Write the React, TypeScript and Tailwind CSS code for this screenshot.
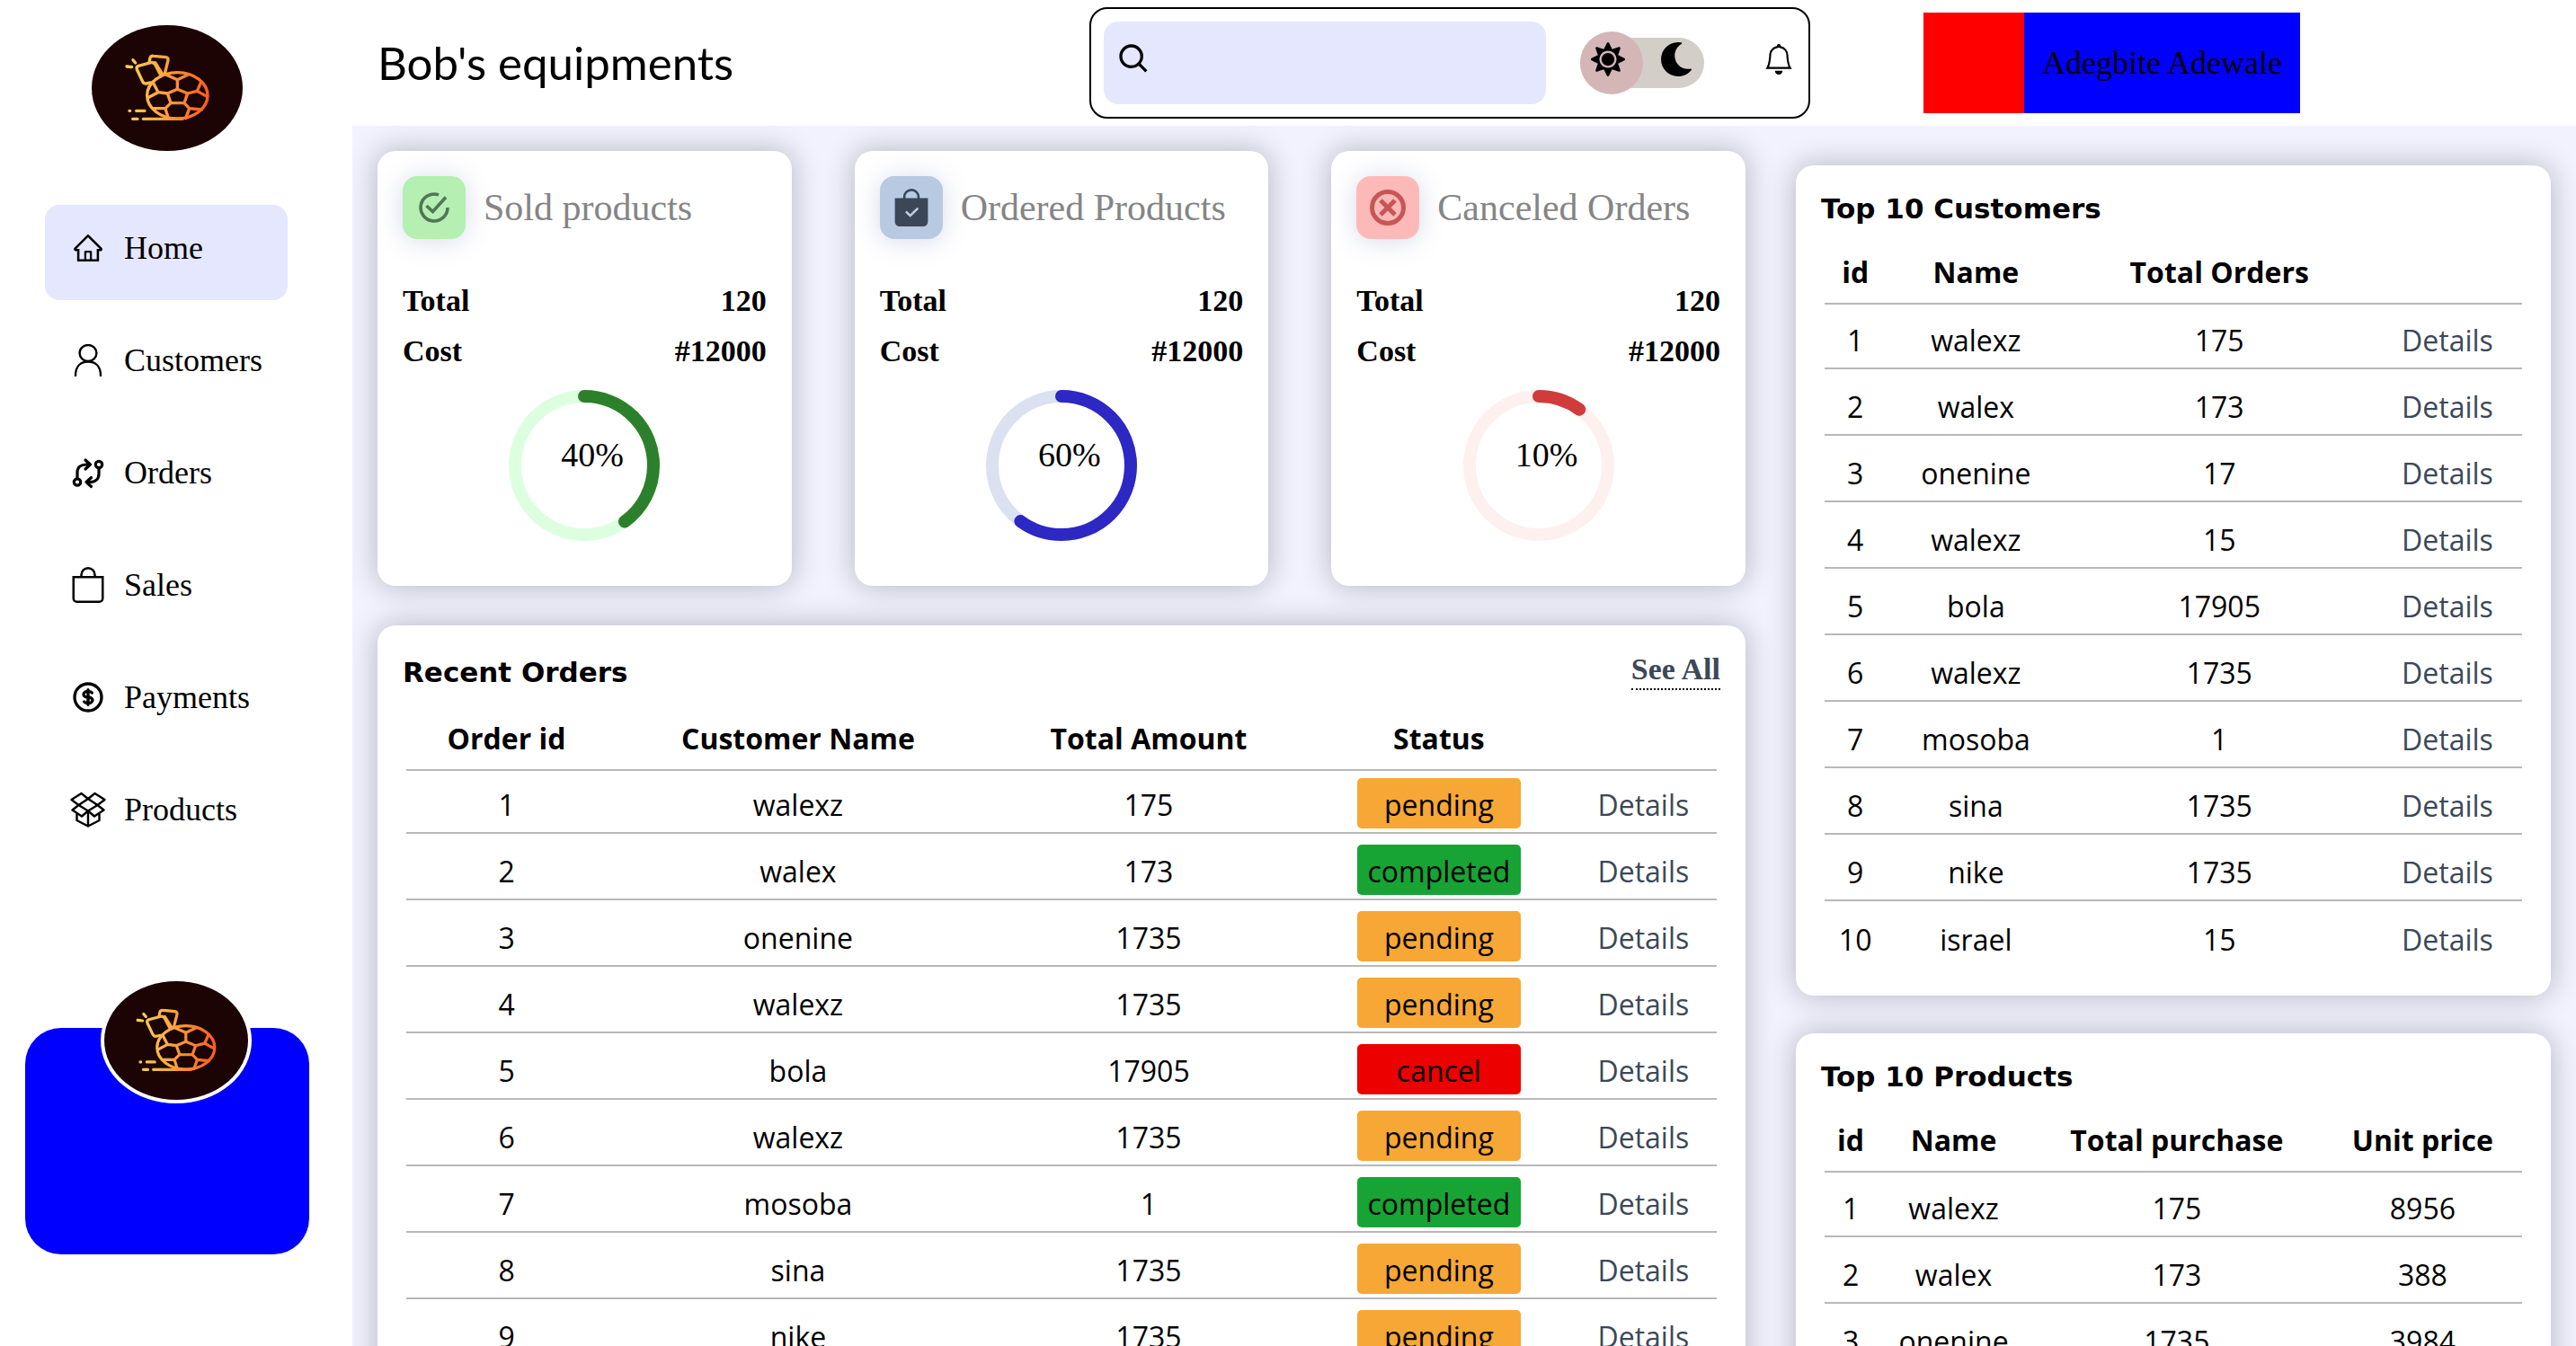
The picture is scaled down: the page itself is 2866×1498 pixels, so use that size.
import { useId } from "react";
import type { ReactNode } from "react";
import { AiOutlineHome } from "react-icons/ai";
import { BiSearch } from "react-icons/bi";
import { BsBag, BsBagCheckFill, BsBell } from "react-icons/bs";
import { FaMoon, FaSun } from "react-icons/fa";
import { HiOutlineCurrencyDollar } from "react-icons/hi";

function Logo({ className }: { className: string }) {
  const id = useId();
  return (
    <svg viewBox="36 24 504 420" preserveAspectRatio="none" className={className} role="img" aria-label="Bob's equipments logo">
      <defs>
        <linearGradient id={id} gradientUnits="userSpaceOnUse" x1="150" y1="240" x2="428" y2="260">
          <stop offset="0" stopColor="#f9d256" />
          <stop offset="0.4" stopColor="#fbab42" />
          <stop offset="1" stopColor="#fb5b1c" />
        </linearGradient>
      </defs>
      <ellipse cx="288" cy="234" rx="252" ry="210" fill="#1c0405" />
      <g fill="none" stroke={`url(#${id})`} strokeWidth="10" strokeLinecap="round" strokeLinejoin="round">
        <ellipse cx="322" cy="259" rx="101" ry="77" />
        <path d="M322 238 356 252 345 284H300L289 252Z" />
        <path d="M322 238V206L285 190M322 206 357 190M289 252 258 248 224 266M258 248 240 214M356 252 388 244 402 212M388 244 422 263M300 284 282 302 292 335M282 302H242M345 284 362 302 350 335M362 302 403 306" />
        <path d="M232 216 218 219Q210 220 206 212L187 172Q184 163 192 160L234 149Q243 147 248 156L268 194" />
        <path d="M228 148 231 133Q234 126 242 127L284 131Q292 133 291 141L280 186M248 149 272 187" />
        <path d="M174 140 182 150M153 162 170 164M162 310H164M185 310H213M173 337H189M208 337H340" />
      </g>
    </svg>
  );
}

const PersonIcon = () => (
  <svg viewBox="0 0 36 36" className="size-9 shrink-0" fill="none" stroke="currentColor" strokeWidth="2.4" strokeLinecap="round">
    <ellipse cx="18" cy="10" rx="9.4" ry="9" />
    <path d="M4 35C4 25 9.500 19.500 18 19.500S32 25 32 35" />
  </svg>
);

const CompareIcon = () => (
  <svg viewBox="0 0 36 36" className="size-9 shrink-0" fill="none" stroke="currentColor" strokeWidth="3.200" strokeLinecap="round" strokeLinejoin="round">
    <circle cx="6" cy="28.500" r="3.700" />
    <circle cx="30" cy="9" r="3.700" />
    <path d="M6 24.500V18C6 12 10 9 16 9H20M15 4 20.500 9 15 14M30 13V19.500C30 25 26 28.500 20 28.500H16M21.500 23.500 16 28.500 21.500 33.500" />
  </svg>
);

const BoxIcon = () => (
  <svg viewBox="0 0 40 40" className="-mx-0.5 size-10 shrink-0" fill="none" stroke="currentColor" strokeWidth="2.400" strokeLinejoin="round">
    <path d="M1.500 9 12.500 2 20 8 9.500 15ZM38.500 9 27.500 2 20 8 30.500 15ZM9.500 15 2.500 20.500 13 27.500 20 21.500ZM30.500 15 37.500 20.500 27 27.500 20 21.500ZM9.500 15 20 8 30.500 15 20 21.500Z" />
    <path d="M7.500 24.500V32L20 38.500 32.500 32V24.500M20 21.500V38.500" />
  </svg>
);

const CheckIcon = () => (
  <svg viewBox="0 0 36 36" className="size-9" fill="none" stroke="currentColor" strokeWidth="3.600">
    <path d="M33 18A15 15 0 1 1 23 3.850" />
    <path d="M9.500 16 16.500 22.500 31 6.500" />
  </svg>
);

const CancelIcon = () => (
  <svg viewBox="0 0 40 40" className="size-10" fill="none" stroke="currentColor" strokeWidth="5">
    <circle cx="20" cy="20" r="17.500" />
    <path d="M12 12 28 28M28 12 12 28" />
  </svg>
);

const navItems: { label: string; icon: ReactNode }[] = [
  { label: "Home", icon: <AiOutlineHome className="size-9 shrink-0" /> },
  { label: "Customers", icon: <PersonIcon /> },
  { label: "Orders", icon: <CompareIcon /> },
  { label: "Sales", icon: <BsBag className="-mx-0.5 size-10 shrink-0" /> },
  { label: "Payments", icon: <HiOutlineCurrencyDollar className="-mx-0.5 size-10 shrink-0" /> },
  { label: "Products", icon: <BoxIcon /> },
];

function Sidebar() {
  return (
    <aside className="relative z-10 flex w-[392px] shrink-0 flex-col bg-white">
      <Logo className="mt-7 ml-[102px] h-[140px] w-[168px]" />
      <nav className="mt-[60px] ml-[50px] flex w-[270px] flex-col gap-[19px]">
        {navItems.map((item, i) => (
          <a
            key={item.label}
            href="#"
            className={`flex h-[106px] items-center gap-[22px] rounded-2xl pb-2.5 pl-[30px] text-[36px] ${i === 0 ? "bg-[#e5e7ff]" : ""}`}
          >
            {item.icon}
            <span>{item.label}</span>
          </a>
        ))}
      </nav>
      <div className="relative mx-7 mt-[185px] mr-12 h-[252px] rounded-[40px] bg-[#0000ff]">
        <div className="absolute -top-14 left-[84px] h-[140px] w-[168px] rounded-[50%] bg-white p-1">
          <Logo className="h-full w-full" />
        </div>
      </div>
    </aside>
  );
}

function Header() {
  return (
    <header className="relative z-10 flex h-[140px] shrink-0 items-center bg-white pl-7">
      <h1 className="w-[792px] font-[Lato,sans-serif] text-[51px]">Bob's equipments</h1>
      <div className="flex h-[124px] w-[802px] items-center rounded-[20px] border-2 border-black pl-3.5">
        <label className="flex h-[92px] w-[492px] items-center rounded-2xl bg-[#e5e7ff] px-3.5">
          <BiSearch className="mb-2 size-10 shrink-0" aria-label="Search" />
          <input type="search" aria-label="Search" className="h-full w-full bg-transparent px-3 text-[36px] outline-none" />
        </label>
        <button type="button" aria-label="Switch theme" className="ml-[38px] flex h-14 w-[138px] items-center rounded-full bg-[#d3cec8]">
          <span className="flex size-[70px] items-center justify-center rounded-full bg-[#d4b6b7] pr-2 pb-2">
            <FaSun className="size-[38px]" />
          </span>
          <FaMoon className="mb-2 ml-[18px] size-[38px]" />
        </button>
        <button type="button" aria-label="Notifications" className="mb-2 ml-[66px]">
          <BsBell className="size-[34px]" />
        </button>
      </div>
      <div className="ml-[126px] flex h-28 items-stretch bg-[#0000ff]">
        <div className="w-28 bg-[#ff0000]" />
        <span className="px-5 text-[36px] leading-[112px] whitespace-nowrap">Adegbite Adewale</span>
      </div>
    </header>
  );
}

const cardShadow = "shadow-[0_0_32px_2px_rgba(0,0,0,0.23)]";

type Stat = { title: string; percent: number; icon: ReactNode; tile: string; track: string; bar: string };

const stats: Stat[] = [
  { title: "Sold products", percent: 40, icon: <CheckIcon />, tile: "bg-[#b5efb2] text-[#527654]", track: "#dcffe0", bar: "#2d802b" },
  { title: "Ordered Products", percent: 60, icon: <BsBagCheckFill className="size-[42px]" />, tile: "bg-[#b8cae2] text-[#3b4757]", track: "#dbe1f0", bar: "#2d27c4" },
  { title: "Canceled Orders", percent: 10, icon: <CancelIcon />, tile: "bg-[#fdb9b8] text-[#c75656]", track: "#fef0ef", bar: "#d03b3b" },
];

function StatCard({ stat }: { stat: Stat }) {
  const r = 77;
  const length = 2 * Math.PI * r;
  return (
    <section className={`rounded-[20px] bg-white px-7 pt-7 pb-[50px] ${cardShadow}`}>
      <div className="flex items-center gap-5">
        <span className={`flex size-[70px] shrink-0 items-center justify-center rounded-2xl shadow-[0_2px_28px_rgba(100,110,170,0.25)] ${stat.tile}`}>
          {stat.icon}
        </span>
        <h2 className="text-[42px] whitespace-nowrap text-[#858585]">{stat.title}</h2>
      </div>
      <dl className="mt-[41px] grid grid-cols-2 text-[34px] leading-[56px] font-bold">
        <dt>Total</dt>
        <dd className="text-right">120</dd>
        <dt>Cost</dt>
        <dd className="text-right">#12000</dd>
      </dl>
      <div className="relative mx-auto mt-[15px] size-[168px]">
        <svg viewBox="0 0 168 168" className="size-full" fill="none" strokeWidth="14" strokeLinecap="round">
          <circle cx="84" cy="84" r={r} stroke={stat.track} />
          <circle
            cx="84"
            cy="84"
            r={r}
            stroke={stat.bar}
            strokeDasharray={`${(length * stat.percent) / 100} ${length}`}
            transform="rotate(-90 84 84)"
          />
        </svg>
        <span className="absolute top-12 left-[58px] text-[38px] leading-[48px]">{stat.percent}%</span>
      </div>
    </section>
  );
}

const people: { name: string; amount: number; orders: number; status: string; price: number }[] = [
  { name: "walexz", amount: 175, orders: 175, status: "pending", price: 8956 },
  { name: "walex", amount: 173, orders: 173, status: "completed", price: 388 },
  { name: "onenine", amount: 1735, orders: 17, status: "pending", price: 3984 },
  { name: "walexz", amount: 1735, orders: 15, status: "pending", price: 8956 },
  { name: "bola", amount: 17905, orders: 17905, status: "cancel", price: 388 },
  { name: "walexz", amount: 1735, orders: 1735, status: "pending", price: 3984 },
  { name: "mosoba", amount: 1, orders: 1, status: "completed", price: 8956 },
  { name: "sina", amount: 1735, orders: 1735, status: "pending", price: 388 },
  { name: "nike", amount: 1735, orders: 1735, status: "pending", price: 3984 },
  { name: "israel", amount: 15, orders: 15, status: "pending", price: 8956 },
];

const badgeColor: Record<string, string> = {
  pending: "bg-[#f7a735]",
  completed: "bg-[#17a435]",
  cancel: "bg-[#ed0000]",
};

const Details = () => (
  <a href="#" className="text-[#3c4858]">
    Details
  </a>
);

type TableProps = { columns: string[]; headers: string[]; rows: ReactNode[][]; firstRow?: string };

function DataTable({ columns, headers, rows, firstRow = "h-[72px]" }: TableProps) {
  return (
    <table className="w-full table-fixed border-collapse text-center font-['Open_Sans',sans-serif] text-[32px] leading-[60px]">
      <colgroup>
        {columns.map((width, i) => (
          <col key={i} className={width} />
        ))}
      </colgroup>
      <thead>
        <tr className="border-b-2 border-[#b8b8b8]">
          {headers.map((header, i) => (
            <th key={i} className="h-[72px] p-0 pb-1 align-bottom font-bold">
              {header}
            </th>
          ))}
        </tr>
      </thead>
      <tbody>
        {rows.map((cells, i) => (
          <tr key={i} className="border-b-2 border-[#b8b8b8] last:border-b-0">
            {cells.map((cell, j) => (
              <td key={j} className={`p-0 align-bottom ${i === 0 ? firstRow : "h-[74px]"}`}>
                {cell}
              </td>
            ))}
          </tr>
        ))}
      </tbody>
    </table>
  );
}

const titleStyle = "font-['DejaVu_Sans',sans-serif] text-[31px] font-bold";

function RecentOrders() {
  return (
    <section className={`rounded-[20px] bg-white px-7 pt-7 pb-10 ${cardShadow}`}>
      <div className="flex h-[61px] items-start justify-between">
        <h2 className={`${titleStyle} leading-[48px]`}>Recent Orders</h2>
        <a href="#" className="border-b-2 border-dotted border-black text-[34px] leading-[42px] font-bold text-[#3c4858]">
          See All
        </a>
      </div>
      <div className="px-1">
        <DataTable
          columns={["w-[15.3%]", "w-[29.2%]", "w-[24.3%]", "w-[20%]", "w-[11.2%]"]}
          headers={["Order id", "Customer Name", "Total Amount", "Status", ""]}
          firstRow="h-[70px]"
          rows={people.map((p, i) => [
            i + 1,
            p.name,
            p.amount,
            <span className={`mx-auto mb-1 block h-14 w-[182px] rounded-[5px] ${badgeColor[p.status]}`}>{p.status}</span>,
            <Details />,
          ])}
        />
      </div>
    </section>
  );
}

function RankingCard({ title, columns, headers, rows }: { title: string; columns: string[]; headers: string[]; rows: ReactNode[][] }) {
  return (
    <section className={`rounded-[20px] bg-white px-8 pt-6 pb-8 ${cardShadow}`}>
      <h2 className={`-ml-1 ${titleStyle} leading-[48px]`}>{title}</h2>
      <div className="mt-2.5">
        <DataTable columns={columns} headers={headers} rows={rows} />
      </div>
    </section>
  );
}

export default function App() {
  return (
    <div className="flex h-screen overflow-hidden bg-[#f2f2ff] font-['Liberation_Serif',serif] text-black">
      <Sidebar />
      <div className="flex min-w-0 flex-1 flex-col">
        <Header />
        <main className="grid min-h-0 flex-1 grid-cols-[1522fr_840fr] items-start gap-14 px-7 pt-7">
          <div className="flex flex-col gap-11">
            <div className="grid grid-cols-3 gap-[70px]">
              {stats.map((stat) => (
                <StatCard key={stat.title} stat={stat} />
              ))}
            </div>
            <RecentOrders />
          </div>
          <div className="flex flex-col gap-[42px] pt-4">
            <RankingCard
              title="Top 10 Customers"
              columns={["w-[8.8%]", "w-[25.8%]", "w-[44%]", "w-[21.4%]"]}
              headers={["id", "Name", "Total Orders", ""]}
              rows={people.map((p, i) => [i + 1, p.name, p.orders, <Details />])}
            />
            <RankingCard
              title="Top 10 Products"
              columns={["w-[7.5%]", "w-[22%]", "w-[42%]", "w-[28.5%]"]}
              headers={["id", "Name", "Total purchase", "Unit price"]}
              rows={people.map((p, i) => [i + 1, p.name, p.amount, p.price])}
            />
          </div>
        </main>
      </div>
    </div>
  );
}
